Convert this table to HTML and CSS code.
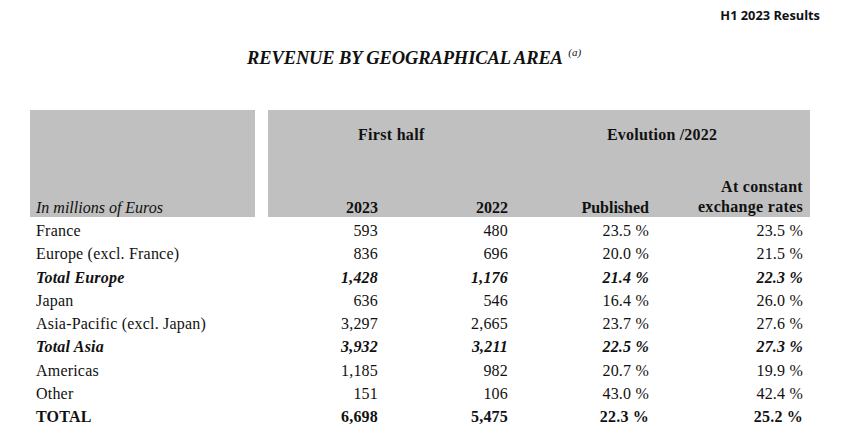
FILE: index.html
```html
<!DOCTYPE html>
<html>
<head>
<meta charset="utf-8">
<link rel="stylesheet" href="styles.css">
</head>
<body>
<div class="page">
  <div class="topbar">H1 2023 Results</div>
  <h1 class="title">REVENUE BY GEOGRAPHICAL AREA <sup>(a)</sup></h1>
  <div class="table">
    <div class="head">
      <div class="head-left"><span class="unit">In millions of Euros</span></div>
      <div class="head-gap"></div>
      <div class="head-right">
        <div class="group g1">First half</div>
        <div class="group g2">Evolution /2022</div>
        <div class="sub c1">2023</div>
        <div class="sub c2">2022</div>
        <div class="sub c3">Published</div>
        <div class="sub c4 two">At constant<br>exchange rates</div>
      </div>
    </div>
    <div class="body">
      <div class="row"><span class="lbl">France</span><span></span><span class="num">593</span><span class="num">480</span><span class="num">23.5 %</span><span class="num last">23.5 %</span></div>
      <div class="row"><span class="lbl">Europe (excl. France)</span><span></span><span class="num">836</span><span class="num">696</span><span class="num">20.0 %</span><span class="num last">21.5 %</span></div>
      <div class="row sub-total"><span class="lbl">Total Europe</span><span></span><span class="num">1,428</span><span class="num">1,176</span><span class="num">21.4 %</span><span class="num last">22.3 %</span></div>
      <div class="row"><span class="lbl">Japan</span><span></span><span class="num">636</span><span class="num">546</span><span class="num">16.4 %</span><span class="num last">26.0 %</span></div>
      <div class="row"><span class="lbl">Asia-Pacific (excl. Japan)</span><span></span><span class="num">3,297</span><span class="num">2,665</span><span class="num">23.7 %</span><span class="num last">27.6 %</span></div>
      <div class="row sub-total"><span class="lbl">Total Asia</span><span></span><span class="num">3,932</span><span class="num">3,211</span><span class="num">22.5 %</span><span class="num last">27.3 %</span></div>
      <div class="row"><span class="lbl">Americas</span><span></span><span class="num">1,185</span><span class="num">982</span><span class="num">20.7 %</span><span class="num last">19.9 %</span></div>
      <div class="row"><span class="lbl">Other</span><span></span><span class="num">151</span><span class="num">106</span><span class="num">43.0 %</span><span class="num last">42.4 %</span></div>
      <div class="row grand"><span class="lbl">TOTAL</span><span></span><span class="num">6,698</span><span class="num">5,475</span><span class="num">22.3 %</span><span class="num last">25.2 %</span></div>
    </div>
  </div>
</div>
</body>
</html>
```
FILE: styles.css
```css
html, body {
  margin: 0;
  padding: 0;
  background: #ffffff;
}
.page {
  width: 845px;
  height: 441px;
  overflow: hidden;
  color: #111111;
  font-family: "Liberation Serif", "Times New Roman", serif;
}
.topbar {
  font-family: "Open Sans", "Liberation Sans", sans-serif;
  font-weight: 700;
  font-size: 12.8px;
  line-height: 16px;
  text-align: right;
  padding: 7px 25px 0 0;
  height: 23px;
}
.title {
  margin: 0;
  padding: 17px 0 0 247px;
  font-size: 18.5px;
  line-height: 22px;
  font-weight: 700;
  font-style: italic;
  letter-spacing: -0.12px;
  height: 40px;
}
.title sup {
  font-size: 11px;
  font-weight: 400;
  letter-spacing: 0;
  vertical-align: 8px;
  line-height: 0;
  margin-left: 2px;
}
.table {
  margin-left: 30px;
  margin-top: 23px;
  width: 780px;
}
.head {
  display: grid;
  grid-template-columns: 225px 13px 542px;
  height: 107px;
}
.head-left {
  background: #c0c0c0;
  display: flex;
  align-items: flex-end;
  padding-left: 6px;
}
.unit {
  font-style: italic;
  font-size: 16px;
  line-height: 18px;
}
.head-right {
  background: #c0c0c0;
  display: grid;
  grid-template-columns: 116px 130px 141px 155px;
  grid-template-rows: 1fr auto;
  padding-top: 16px;
  font-weight: 700;
  font-size: 16px;
  line-height: 18px;
}
.group {
  align-self: start;
}
.g1 {
  grid-column: 1 / 3;
  padding-left: 90px;
  letter-spacing: 0.3px;
}
.g2 {
  grid-column: 3 / 5;
  padding-left: 93px;
  letter-spacing: 0.2px;
}
.sub {
  grid-row: 2;
  text-align: right;
  padding-right: 6px;
  align-self: end;
}
.c1 { grid-column: 1; }
.c2 { grid-column: 2; }
.c3 { grid-column: 3; }
.c4 { grid-column: 4; padding-right: 7px; }
.two {
  line-height: 20px;
  letter-spacing: 0.3px;
}
.body {
  padding-top: 2px;
}
.row {
  display: grid;
  grid-template-columns: 225px 13px 116px 130px 141px 155px;
  height: 23.3px;
  font-size: 16px;
  line-height: 23.3px;
  letter-spacing: 0.2px;
}
.lbl {
  padding-left: 6px;
  white-space: nowrap;
}
.num {
  text-align: right;
  padding-right: 6px;
}
.num.last {
  padding-right: 7px;
}
.sub-total {
  font-weight: 700;
  font-style: italic;
}
.grand {
  font-weight: 700;
}
```
